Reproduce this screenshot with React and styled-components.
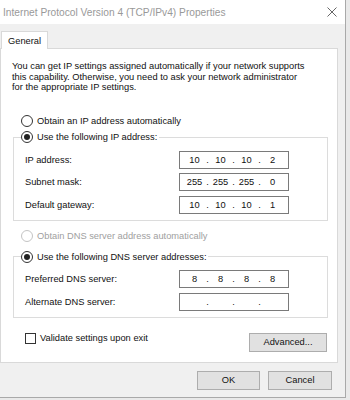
import React from "react";
import styled, { createGlobalStyle } from "styled-components";

const Global = createGlobalStyle`
  html, body { margin: 0; padding: 0; background: #e9e9e9; }
  body { font-family: "Liberation Sans", Arial, sans-serif; }
  * { box-sizing: border-box; }
`;

const Window = styled.div`
  width: 346px;
  height: 398px;
  background: #f0f0f0;
  border-right: 1px solid #a9a9a9;
  border-bottom: 1px solid #a9a9a9;
  display: flex;
  flex-direction: column;
  font-size: 9.3px;
  color: #111;
`;

const TitleBar = styled.div`
  height: 24px;
  background: #fff;
  display: flex;
  align-items: center;
  justify-content: space-between;
  padding: 0 8px 0 3px;
`;

const Title = styled.span`
  font-size: 10.2px;
  color: #999;
`;

const Body = styled.div`
  padding: 7px 7px 0 0;
  display: flex;
  flex-direction: column;
`;

const TabStrip = styled.div`
  display: flex;
  padding-left: 1px;
  margin-bottom: -1px;
  position: relative;
  z-index: 1;
`;

const Tab = styled.div`
  height: 18px;
  padding: 0 6px;
  display: flex;
  align-items: center;
  background: #fff;
  border: 1px solid #d9d9d9;
  border-bottom: none;
`;

const Panel = styled.div`
  background: #fff;
  border: 1px solid #d9d9d9;
  padding: 12px 9px 10px 11px;
  display: flex;
  flex-direction: column;
`;

const Desc = styled.p`
  margin: 0;
  line-height: 10.5px;
`;

const RadioRow = styled.label`
  display: flex;
  align-items: center;
  gap: 4px;
  height: 12px;
  white-space: nowrap;
  margin-left: ${(p) => p.$indent || 0}px;
  margin-top: ${(p) => p.$mt || 0}px;
  color: ${(p) => (p.$disabled ? "#a0a0a0" : "inherit")};
`;

const RadioCircle = styled.span`
  flex: none;
  width: 12px;
  height: 12px;
  border-radius: 50%;
  border: 1px solid ${(p) => (p.$disabled ? "#c4c4c4" : "#333")};
  background: #fff;
  display: flex;
  align-items: center;
  justify-content: center;
  &::after {
    content: "";
    display: ${(p) => (p.$checked ? "block" : "none")};
    width: 6px;
    height: 6px;
    border-radius: 50%;
    background: #222;
  }
`;

const Group = styled.fieldset`
  margin: ${(p) => p.$mt || 0}px 0 0 1px;
  border: 1px solid #dcdcdc;
  padding: 7.5px 38px 6px 11px;
  display: flex;
  flex-direction: column;
  gap: 4.5px;
  min-width: 0;
`;

const Legend = styled.legend`
  padding: 0 2px 0 0;
  margin-left: -4px;
  height: 12px;
`;

const FieldRow = styled.div`
  display: flex;
  align-items: center;
  justify-content: space-between;
  height: 18px;
`;

const IpBox = styled.div`
  width: 110px;
  height: 18px;
  border: 1px solid #7a7a7a;
  display: flex;
  align-items: center;
  padding-left: 4px;
`;

const Octet = styled.span`
  width: 21px;
  text-align: center;
`;

const Dot = styled.span`
  width: 5px;
  text-align: center;
`;

const BottomRow = styled.div`
  display: flex;
  justify-content: space-between;
  align-items: flex-start;
  margin-top: 15px;
  padding-left: 13px;
  margin-right: 1px;
`;

const CheckRow = styled.label`
  display: flex;
  align-items: center;
  gap: 4px;
  height: 11px;
`;

const CheckBox = styled.span`
  width: 11px;
  height: 11px;
  border: 1px solid #333;
  background: #fff;
`;

const Button = styled.button`
  font: inherit;
  color: #111;
  width: ${(p) => p.$w}px;
  height: 19px;
  background: #e1e1e1;
  border: 1px solid #adadad;
  padding: 0;
  display: flex;
  align-items: center;
  justify-content: center;
`;

const Footer = styled.div`
  display: flex;
  justify-content: flex-end;
  gap: 8px;
  padding: 8px 6px 0 0;
`;

function Radio({ checked, disabled, children, ...rest }) {
  return (
    <RadioRow $disabled={disabled} {...rest}>
      <RadioCircle $checked={checked} $disabled={disabled} />
      <span>{children}</span>
    </RadioRow>
  );
}

function IpField({ value }) {
  const parts = value ? value.split(".") : ["", "", "", ""];
  const out = [];
  parts.forEach((p, i) => {
    out.push(<Octet key={"o" + i}>{p}</Octet>);
    if (i < 3) out.push(<Dot key={"d" + i}>.</Dot>);
  });
  return <IpBox>{out}</IpBox>;
}

export default function App() {
  return (
    <>
      <Global />
      <Window>
        <TitleBar>
          <Title>Internet Protocol Version 4 (TCP/IPv4) Properties</Title>
          <svg width="10" height="10" viewBox="0 0 10 10">
            <path d="M0.5 0.5 L9.5 9.5 M9.5 0.5 L0.5 9.5" stroke="#555" strokeWidth="0.9" />
          </svg>
        </TitleBar>
        <Body>
          <TabStrip>
            <Tab>General</Tab>
          </TabStrip>
          <Panel>
            <Desc>
              You can get IP settings assigned automatically if your network supports
              <br />
              this capability. Otherwise, you need to ask your network administrator
              <br />
              for the appropriate IP settings.
            </Desc>
            <Radio $indent={9} $mt={22.5}>
              Obtain an IP address automatically
            </Radio>
            <Group $mt={4}>
              <Legend>
                <Radio checked>Use the following IP address:</Radio>
              </Legend>
              <FieldRow>
                <span>IP address:</span>
                <IpField value="10.10.10.2" />
              </FieldRow>
              <FieldRow>
                <span>Subnet mask:</span>
                <IpField value="255.255.255.0" />
              </FieldRow>
              <FieldRow>
                <span>Default gateway:</span>
                <IpField value="10.10.10.1" />
              </FieldRow>
            </Group>
            <Radio disabled $indent={9} $mt={9}>
              Obtain DNS server address automatically
            </Radio>
            <Group $mt={9}>
              <Legend>
                <Radio checked>Use the following DNS server addresses:</Radio>
              </Legend>
              <FieldRow>
                <span>Preferred DNS server:</span>
                <IpField value="8.8.8.8" />
              </FieldRow>
              <FieldRow>
                <span>Alternate DNS server:</span>
                <IpField />
              </FieldRow>
            </Group>
            <BottomRow>
              <CheckRow>
                <CheckBox />
                <span>Validate settings upon exit</span>
              </CheckRow>
              <Button $w={78}>Advanced...</Button>
            </BottomRow>
          </Panel>
          <Footer>
            <Button $w={63}>OK</Button>
            <Button $w={64}>Cancel</Button>
          </Footer>
        </Body>
      </Window>
    </>
  );
}
